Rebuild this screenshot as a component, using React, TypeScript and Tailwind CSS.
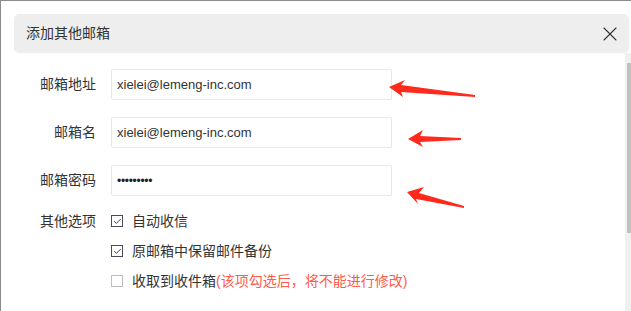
import { Check, X } from "lucide-react";

const font = { fontFamily: '"Liberation Sans", "Noto Sans CJK SC", sans-serif' };

function Field({ label, value, secret }: { label: string; value: string; secret?: boolean }) {
  return (
    <div className="flex items-center">
      <div className="w-[82px] text-right text-[14px] text-[#333]">{label}</div>
      <div className="ml-[15px] flex h-[31px] w-[281px] items-center rounded-[2px] border border-[#e8e8e8] px-[5px] text-[13px] text-[#333]">
        {secret ? <span className="text-[12px] tracking-[-0.3px] text-[#222]">{value}</span> : value}
      </div>
    </div>
  );
}

function Option({ checked, children }: { checked: boolean; children: React.ReactNode }) {
  return (
    <div className="flex h-[30px] items-center">
      <span
        className={
          checked
            ? "flex h-[12px] w-[12px] items-center justify-center border-[1.5px] border-[#4a4a5e]"
            : "flex h-[12px] w-[12px] items-center justify-center border-[1.5px] border-[#bdbdbd]"
        }
      >
        {checked && <Check size={9} strokeWidth={2.6} className="text-[#2f3a5a]" />}
      </span>
      <span className="ml-[9px] text-[14px] text-[#333]">{children}</span>
    </div>
  );
}

export default function App() {
  return (
    <div style={font} className="relative h-[311px] w-[631px] overflow-hidden border-l border-t border-[#8c8c8c] bg-white">
      <div className="flex flex-col pl-[13px] pt-[13px]">
        <div className="flex h-[39px] w-[615px] items-center justify-between rounded-[5px] bg-[#eeeeee] pl-[12px] pr-[7px]">
          <span className="text-[14px] text-[#333]">添加其他邮箱</span>
          <X size={24} strokeWidth={1.1} className="text-[#333]" />
        </div>
        <div className="flex">
          <div className="flex flex-1 flex-col pt-[16px]">
            <div className="flex flex-col gap-[17px]">
              <Field label="邮箱地址" value="xielei@lemeng-inc.com" />
              <Field label="邮箱名" value="xielei@lemeng-inc.com" />
              <Field label="邮箱密码" value="•••••••••" secret />
            </div>
            <div className="mt-[10px] flex">
              <div className="flex h-[30px] w-[82px] items-center justify-end text-[14px] text-[#333]">其他选项</div>
              <div className="ml-[15px] flex flex-col">
                <Option checked>自动收信</Option>
                <Option checked>原邮箱中保留邮件备份</Option>
                <Option checked={false}>
                  收取到收件箱<span className="text-[#ff5a4a]">(该项勾选后，将不能进行修改)</span>
                </Option>
              </div>
            </div>
          </div>
          <div className="flex h-[260px] w-[6px] flex-col bg-[#f0f0f0] pl-[2px] pt-[10px]">
            <div className="h-[170px] w-full bg-[#c1c1c1]" />
          </div>
        </div>
      </div>
      <svg className="pointer-events-none absolute left-[-1px] top-[-1px]" width="631" height="311" viewBox="0 0 631 311">
        <g fill="#ff2a1c">
          <polygon points="389,87 405,80 401,85 475,95 475,97 401,92 403,97" />
          <polygon points="408,139 423,130 420,136 461,138 461,140 420,142 423,147" />
          <polygon points="407,192 424,187 419,193 464,206 464,208 416,199 418,204" />
        </g>
      </svg>
    </div>
  );
}
